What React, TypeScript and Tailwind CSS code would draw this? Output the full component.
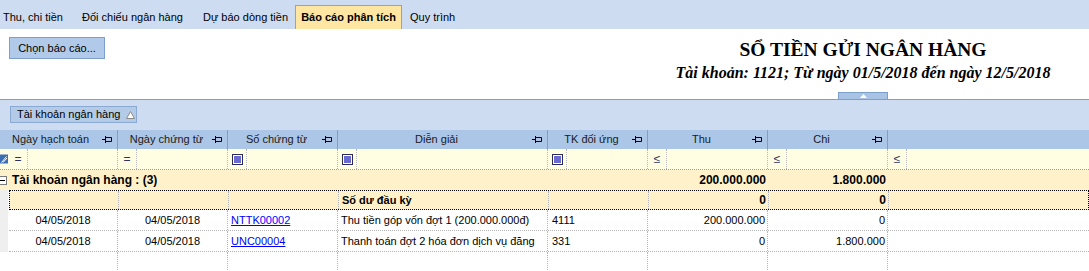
import React from 'react';

const COLS = 'grid grid-cols-[9px_109px_110px_110px_210px_100px_120px_120px_1fr]';
const BODY_COLS = 'grid grid-cols-[109px_110px_110px_210px_100px_120px_120px_1fr]';

const tabs = [
  { label: 'Thu, chi tiền', width: 'w-[79px]' },
  { label: 'Đối chiếu ngân hàng', width: 'w-[121px]' },
  { label: 'Dự báo dòng tiền', width: 'w-[92px]' },
];

const headers = [
  { label: 'Ngày hạch toán', align: 'left' },
  { label: 'Ngày chứng từ', align: 'center' },
  { label: 'Số chứng từ', align: 'center' },
  { label: 'Diễn giải', align: 'center' },
  { label: 'TK đối ứng', align: 'center' },
  { label: 'Thu', align: 'center' },
  { label: 'Chi', align: 'center' },
];

// filter operator per column
const filters: ('eq' | 'box' | 'le')[] = ['eq', 'eq', 'box', 'box', 'box', 'le', 'le', 'le'];

const rows = [
  {
    hachToan: '04/05/2018',
    chungTu: '04/05/2018',
    so: 'NTTK00002',
    dienGiai: 'Thu tiền góp vốn đợt 1 (200.000.000đ)',
    tk: '4111',
    thu: '200.000.000',
    chi: '0',
  },
  {
    hachToan: '04/05/2018',
    chungTu: '04/05/2018',
    so: 'UNC00004',
    dienGiai: 'Thanh toán đợt 2 hóa đơn dịch vụ đăng',
    tk: '331',
    thu: '0',
    chi: '1.800.000',
  },
];

function PinIcon() {
  return (
    <svg width="10" height="9" viewBox="0 0 10 9" className="shrink-0">
      <path d="M0 4.5H3M3.5 1V8M3.5 2.5H9.5V6.5H3.5" stroke="#000" strokeWidth="1" fill="none" />
    </svg>
  );
}

function FilterOp({ kind }: { kind: 'eq' | 'box' | 'le' }) {
  return (
    <div className="flex h-full">
      <div className="w-[19px] h-full flex items-center justify-center border-r border-dotted border-[#b8b8b8]">
        {kind === 'eq' && <span className="text-[12px] leading-none text-[#303060]">=</span>}
        {kind === 'le' && <span className="text-[12px] leading-none text-[#303060]">≤</span>}
        {kind === 'box' && (
          <div className="w-[11px] h-[11px] border border-[#2a2a5a] flex items-center justify-center bg-white">
            <div className="w-[7px] h-[7px] bg-[#6a6ad0]" />
          </div>
        )}
      </div>
    </div>
  );
}

export default function App() {
  const dot = 'border-r border-dotted border-[#b4b4b4]';
  return (
    <div
      className="w-[1089px] h-[271px] overflow-hidden bg-white text-[11px] text-black"
      style={{ fontFamily: '"Liberation Sans", Arial, sans-serif' }}
    >
      {/* Tabs */}
      <div className="h-[29px] bg-[#cddcf0] flex items-end pl-[3px]">
        {tabs.map((t) => (
          <div key={t.label} className={`h-[24px] ${t.width} flex items-center`}>
            {t.label}
          </div>
        ))}
        <div className="h-[24px] w-[107px] bg-[#ffe6a2] border border-b-0 border-[#86a6d2] flex items-center justify-center font-bold">
          Báo cáo phân tích
        </div>
        <div className="h-[24px] ml-[8px] flex items-center">Quy trình</div>
      </div>

      {/* Report heading */}
      <div className="h-[70px] flex justify-between">
        <div className="pl-[9px] pt-[8px]">
          <button className="h-[22px] w-[96px] bg-[#b1cae9] border border-[#7d9fcc]">Chọn báo cáo...</button>
        </div>
        <div
          className="w-[452px] flex flex-col items-center"
          style={{ fontFamily: '"Liberation Serif", "Times New Roman", serif' }}
        >
          <div className="mt-[9px] text-[19.5px] font-bold leading-[23px]">SỔ TIỀN GỬI NGÂN HÀNG</div>
          <div className="mt-[2px] text-[16px] font-bold italic leading-[20px]">
            Tài khoản: 1121; Từ ngày 01/5/2018 đến ngày 12/5/2018
          </div>
          <div className="mt-auto w-[50px] h-[7px] bg-[#a9c3e4] border border-b-0 border-[#7d9fcc] flex justify-center items-center">
            <svg width="7" height="4" viewBox="0 0 7 4">
              <path d="M0 4L3.5 0L7 4Z" fill="#fff" />
            </svg>
          </div>
        </div>
      </div>

      {/* Group panel */}
      <div className="h-[31px] bg-[#cddcf0] border-t border-[#7d9fcc] pl-[10px] pt-[6px]">
        <div className="inline-flex items-center h-[17px] w-[127px] pl-[6px] bg-[#b4cbe8] border border-[#8aaad4]">
          Tài khoản ngân hàng
          <svg width="9" height="8" viewBox="0 0 9 8" className="ml-[6px]">
            <path d="M4.5 0.5L8.5 7.5H0.5Z" fill="#fff" stroke="#8a8a8a" strokeWidth="1" />
          </svg>
        </div>
      </div>

      {/* Column headers */}
      <div className={`${COLS} h-[19px] bg-[#abc6e7]`}>
        <div />
        {headers.map((h) => (
          <div key={h.label} className="flex items-center border-r border-[#7d9fcc] pl-[3px] pr-[5px]">
            <span className={`flex-1 text-[#1a1a1a] ${h.align === 'left' ? 'text-left' : 'text-center'}`}>
              {h.label}
            </span>
            <PinIcon />
          </div>
        ))}
        <div />
      </div>

      {/* Filter row */}
      <div className={`${COLS} h-[21px] bg-[#fffde2] border-b border-dotted border-[#9a9a9a]`}>
        <div className="flex items-center">
          <svg width="9" height="10" viewBox="0 0 9 10">
            <rect x="0" y="0.5" width="8" height="9" fill="#3b6fb5" />
            <path d="M1.5 8.5L6.5 2.5M3 8.5L7 4" stroke="#fff" strokeWidth="1" />
          </svg>
        </div>
        {filters.map((f, i) => (
          <div key={i} className={i < 7 ? dot : ''}>
            <FilterOp kind={f} />
          </div>
        ))}
      </div>

      {/* Group row */}
      <div className={`${COLS} h-[20px] bg-[#fff2ca] font-bold text-[12px]`}>
        <div className="flex items-center">
          <div className="w-[7px] h-[9px] border border-l-0 border-[#7a7a7a] bg-white flex items-center">
            <div className="w-[5px] h-px bg-black" />
          </div>
        </div>
        <div className="col-span-5 flex items-center pl-[3px]">Tài khoản ngân hàng : (3)</div>
        <div className="flex items-center justify-end pr-[2px]">200.000.000</div>
        <div className="flex items-center justify-end pr-[2px]">1.800.000</div>
        <div />
      </div>

      {/* Body */}
      <div className="flex">
        <div className="w-[9px] shrink-0">
          <div className="h-[62px] bg-[#efefef] mr-[1px]" />
        </div>
        <div className="flex-1 flex flex-col">
          {/* Opening balance */}
          <div className={`${BODY_COLS} h-[20px] bg-[#fff2ca] border border-dotted border-black`}>
            <div className={dot} />
            <div className={dot} />
            <div className={dot} />
            <div className={`${dot} flex items-center pl-[3px] font-bold`}>Số dư đầu kỳ</div>
            <div className={dot} />
            <div className={`${dot} flex items-center justify-end pr-[2px] font-bold text-[12px]`}>0</div>
            <div className={`${dot} flex items-center justify-end pr-[2px] font-bold text-[12px]`}>0</div>
            <div />
          </div>
          {rows.map((r) => (
            <div key={r.so} className={`${BODY_COLS} h-[21px] border-b border-dotted border-[#b4b4b4]`}>
              <div className={`${dot} flex items-center justify-center`}>{r.hachToan}</div>
              <div className={`${dot} flex items-center justify-center`}>{r.chungTu}</div>
              <div className={`${dot} flex items-center pl-[3px]`}>
                <span className="text-[#0000ff] underline">{r.so}</span>
              </div>
              <div className={`${dot} flex items-center pl-[3px] whitespace-nowrap overflow-hidden`}>{r.dienGiai}</div>
              <div className={`${dot} flex items-center pl-[4px]`}>{r.tk}</div>
              <div className={`${dot} flex items-center justify-end pr-[2px]`}>{r.thu}</div>
              <div className={`${dot} flex items-center justify-end pr-[2px]`}>{r.chi}</div>
              <div />
            </div>
          ))}
          <div className={`${BODY_COLS} h-[20px]`}>
            <div className={dot} />
            <div className={dot} />
            <div className={dot} />
            <div className={dot} />
            <div className={dot} />
            <div className={dot} />
            <div className={dot} />
            <div />
          </div>
        </div>
      </div>
    </div>
  );
}
